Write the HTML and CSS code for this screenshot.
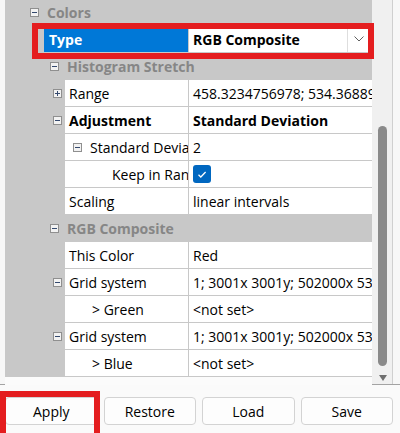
FILE: index.html
```html
<!DOCTYPE html>
<html>
<head>
<meta charset="utf-8">
<link rel="stylesheet" href="styles.css">
</head>
<body>
<div class="app">
  <div class="panel">
    <div class="list">
      <div class="row cat c0">
        <svg class="box" viewBox="0 0 9 9"><rect x=".5" y=".5" width="8" height="8"/><path d="M2 4.5h5"/></svg>
        <span>Colors</span>
      </div>
      <div class="row prop p1 sel">
        <div class="gut"></div>
        <div class="name">Type</div>
        <div class="val bold">RGB Composite<span class="drop"><svg viewBox="0 0 10 6"><path d="M.5 .5L5 5l4.5-4.5"/></svg></span></div>
      </div>
      <div class="row cat c1">
        <svg class="box" viewBox="0 0 9 9"><rect x=".5" y=".5" width="8" height="8"/><path d="M2 4.5h5"/></svg>
        <span>Histogram Stretch</span>
      </div>
      <div class="row prop p2">
        <div class="gut"><svg class="box" viewBox="0 0 9 9"><rect x=".5" y=".5" width="8" height="8"/><path d="M2 4.5h5M4.5 2v5"/></svg></div>
        <div class="name">Range</div>
        <div class="val">458.3234756978; 534.3688945312</div>
      </div>
      <div class="row prop p2">
        <div class="gut"><svg class="box" viewBox="0 0 9 9"><rect x=".5" y=".5" width="8" height="8"/><path d="M2 4.5h5"/></svg></div>
        <div class="name bold">Adjustment</div>
        <div class="val bold">Standard Deviation</div>
      </div>
      <div class="row prop p2">
        <div class="gut"></div>
        <div class="name sub"><svg class="box" viewBox="0 0 9 9"><rect x=".5" y=".5" width="8" height="8"/><path d="M2 4.5h5"/></svg><span>Standard Deviation</span></div>
        <div class="val">2</div>
      </div>
      <div class="row prop p2">
        <div class="gut"></div>
        <div class="name deep">Keep in Range</div>
        <div class="val"><svg class="chk" viewBox="0 0 18 18"><rect width="18" height="18" rx="3"/><path d="M5.5 9.8l2.3 2.2 4.8-5"/></svg></div>
      </div>
      <div class="row prop p2">
        <div class="gut"></div>
        <div class="name">Scaling</div>
        <div class="val">linear intervals</div>
      </div>
      <div class="row cat c1">
        <svg class="box" viewBox="0 0 9 9"><rect x=".5" y=".5" width="8" height="8"/><path d="M2 4.5h5"/></svg>
        <span>RGB Composite</span>
      </div>
      <div class="row prop p2">
        <div class="gut"></div>
        <div class="name">This Color</div>
        <div class="val">Red</div>
      </div>
      <div class="row prop p2">
        <div class="gut"><svg class="box" viewBox="0 0 9 9"><rect x=".5" y=".5" width="8" height="8"/><path d="M2 4.5h5"/></svg></div>
        <div class="name">Grid system</div>
        <div class="val">1; 3001x 3001y; 502000x 5300000y</div>
      </div>
      <div class="row prop p2">
        <div class="gut"></div>
        <div class="name child">&gt; Green</div>
        <div class="val">&lt;not set&gt;</div>
      </div>
      <div class="row prop p2">
        <div class="gut"><svg class="box" viewBox="0 0 9 9"><rect x=".5" y=".5" width="8" height="8"/><path d="M2 4.5h5"/></svg></div>
        <div class="name">Grid system</div>
        <div class="val">1; 3001x 3001y; 502000x 5300000y</div>
      </div>
      <div class="row prop p2">
        <div class="gut"></div>
        <div class="name child">&gt; Blue</div>
        <div class="val">&lt;not set&gt;</div>
      </div>
    </div>
    <div class="scroll">
      <div class="thumb"></div>
      <svg class="arrow" viewBox="0 0 8 6"><path d="M0 0h8L4 6z"/></svg>
    </div>
    <div class="edge"></div>
  </div>
  <div class="buttons">
    <button class="btn">Apply</button>
    <button class="btn">Restore</button>
    <button class="btn">Load</button>
    <button class="btn">Save</button>
  </div>
  <div class="mark mark-type"></div>
  <div class="mark mark-apply"></div>
</div>
</body>
</html>
```

FILE: styles.css
```css
* { box-sizing: border-box; }
html, body { margin: 0; padding: 0; }
body {
  width: 400px;
  height: 433px;
  overflow: hidden;
  background: #fafafa;
  font-family: "Open Sans", "Noto Sans", sans-serif;
  font-size: 14px;
  color: #000;
}
.app { position: relative; width: 400px; height: 433px; }

.panel {
  display: flex;
  height: 385px;
  padding-left: 5px;
  background: #f7f7f7;
  border-bottom: 1px solid #a3a3a3;
}
.list {
  width: 367px;
  height: 385px;
  overflow: hidden;
  background: #fbfbfb;
  display: flex;
  flex-direction: column;
  align-items: stretch;
}
.list .row:first-child { margin-top: -1px; }
.row {
  flex: none;
  height: 27px;
  display: flex;
  align-items: stretch;
  background: #c8c8c8;
  padding-bottom: 1px;
  white-space: nowrap;
}
.row:last-child { height: 27px; }

.cat {
  align-items: center;
  font-weight: 700;
  color: #868686;
}
.cat .box { margin-right: 8px; }
.c0 { padding-left: 25px; }
.c1 { padding-left: 45px; }

.box { width: 9px; height: 9px; flex: none; display: block; }
.box rect { fill: #f2f2f2; stroke: #8f8f8f; stroke-width: 1; }
.box path { stroke: #34496e; stroke-width: 1; fill: none; }

.gut { flex: none; display: flex; align-items: center; }
.p1 .gut { width: 39px; }
.p2 .gut { width: 60px; padding-left: 48px; }

.name {
  flex: none;
  background: #fff;
  overflow: hidden;
  display: flex;
  align-items: center;
  padding-left: 4px;
  margin-right: 1px;
}
.p1 .name { width: 144px; padding-left: 5px; }
.p2 .name { width: 123px; }
.name.sub { padding-left: 8px; }
.name.sub .box { margin-right: 8px; }
.name.deep { padding-left: 47px; }
.name.child { padding-left: 27px; }

.val {
  flex: 1;
  background: #fff;
  overflow: hidden;
  display: flex;
  align-items: center;
  padding-left: 4px;
  position: relative;
}
.bold { font-weight: 700; }

.sel .name { background: #0078d7; color: #fff; font-weight: 700; }
.drop {
  position: absolute;
  left: 158px;
  top: 0;
  bottom: 0;
  width: 22px;
  background: #fff;
  border-left: 1px solid #dedede;
  display: flex;
  align-items: center;
  justify-content: center;
}
.drop svg { width: 10px; height: 6px; }
.drop path { fill: none; stroke: #606060; stroke-width: 1; }

.chk { width: 18px; height: 18px; display: block; }
.chk rect { fill: #0067c0; }
.chk path { fill: none; stroke: #fff; stroke-width: 1.3; }

.scroll {
  flex: none;
  width: 20px;
  background: #f0f0f0;
  display: flex;
  flex-direction: column;
  align-items: center;
  padding-left: 1px;
}
.thumb {
  margin-top: 126px;
  width: 9px;
  height: 240px;
  border-radius: 5px;
  background: #8a8a8a;
}
.arrow { margin-top: 9px; width: 8px; height: 6px; }
.arrow path { fill: #6e6e6e; }
.edge {
  flex: none;
  width: 1px;
  background: #cfcfcf;
}

.buttons {
  display: flex;
  gap: 6px;
  padding: 12px 7px 0 5px;
}
.btn {
  flex: 1;
  height: 28px;
  background: #fdfdfd;
  border: 1px solid #d3d3d3;
  border-radius: 4px;
  font-family: "Open Sans", "Noto Sans", sans-serif;
  font-size: 14px;
  color: #000;
  padding: 0;
}

.mark {
  position: absolute;
  border: 6px solid #e41d1f;
}
.mark-type { left: 32px; top: 23px; width: 342px; height: 36px; }
.mark-apply { left: 0; top: 391px; width: 100px; height: 50px; }
```
